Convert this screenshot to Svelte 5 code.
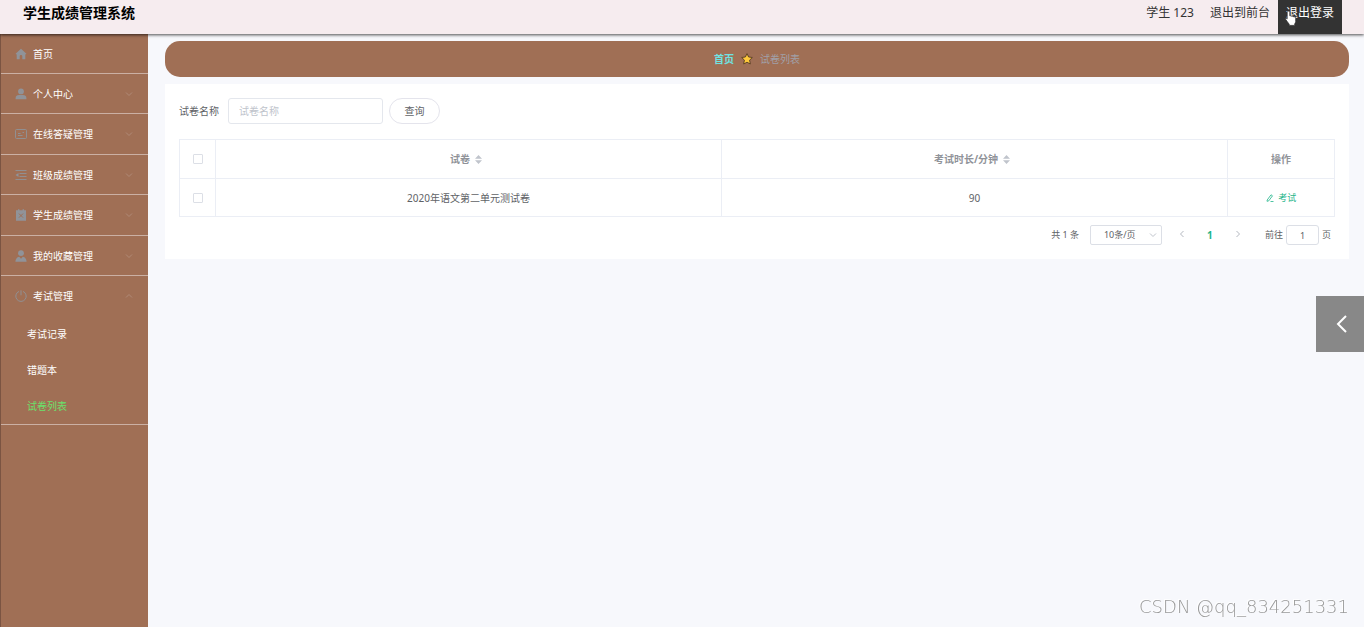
<script>
	let keyword = $state('')
	let pageSize = $state('10')
	let jump = $state('1')

	const menu = [
		{ title: '首页', icon: 'home' },
		{ title: '个人中心', icon: 'user', fold: true },
		{ title: '在线答疑管理', icon: 'postcard', fold: true },
		{ title: '班级成绩管理', icon: 'fold', fold: true },
		{ title: '学生成绩管理', icon: 'release', fold: true },
		{ title: '我的收藏管理', icon: 'custom', fold: true },
		{
			title: '考试管理',
			icon: 'power',
			fold: true,
			children: ['考试记录', '错题本', '试卷列表']
		}
	]
	const active = '试卷列表'

	const papers = [{ name: '2020年语文第二单元测试卷', minutes: 90 }]
</script>

{#snippet menuIcon(name)}
	<svg class="icon" viewBox="0 0 12 12" aria-hidden="true">
		{#if name === 'home'}
			<path d="M6 .8.600 5.800l.6.600.500-.4V11.300h3V8.200a1.300 1.300 0 0 1 2.600 0v3.100h3V6l.5.4.6-.6Z" />
		{:else if name === 'user'}
			<circle cx="6" cy="3.400" r="2.900" />
			<path d="M.6 11.300V9.900C.6 8.100 2.200 7.100 4 7.100h4c1.800 0 3.400 1 3.400 2.800v1.400Z" />
		{:else if name === 'postcard'}
			<rect class="line" x="0.500" y="1.500" width="11" height="9" rx="1" />
			<path class="line" d="M3 5.500h2.500M3 7.500h4.500M7.500 4.500h1.500" />
		{:else if name === 'fold'}
			<path class="line" d="M.5 1.500h11M4.500 4.500h7M4.500 7.500h7M.5 10.500h11" />
			<path d="M.5 6 3.500 4v4Z" />
		{:else if name === 'release'}
			<path d="M1 1.300h2V.3h1.400v1h3.200v-1H9v1h2v10.400H1Z" />
			<path class="cut" d="m4 4.600 4 4m0-4-4 4" />
		{:else if name === 'custom'}
			<circle cx="6" cy="3.200" r="2.900" />
			<path d="M.4 11.700C.4 9 1.800 7.200 4.200 6.700L6 8.800l1.800-2.100c2.400.5 3.800 2.300 3.800 5Z" />
		{:else}
			<path class="line" d="M4 1.400a5.200 5.200 0 1 0 4 0M6 .3v5" />
		{/if}
	</svg>
{/snippet}

{#snippet sorter()}
	<svg class="sorter" viewBox="0 0 7 9" aria-hidden="true">
		<path d="M3.500 0 7 3.800H0ZM3.500 9 0 5.200h7Z" />
	</svg>
{/snippet}

<div class="page">
	<header>
		<h1>学生成绩管理系统</h1>
		<nav class="account">
			<span>学生 123</span>
			<a href="#front">退出到前台</a>
			<a class="hovered" href="#logout">
				退出登录
				<svg class="pointer" viewBox="0 0 12 16" aria-hidden="true">
					<path
						d="M3.500 1.200c.9 0 1.300.6 1.300 1.400v3.200c1-.3 1.700 0 2 .5 1-.3 1.600 0 1.900.6 1.300-.2 2 .4 2 1.500v3.200c0 1-.7 1.700-1 2.400v1.400H4.200v-1.200C3 12.600 1.700 11 .8 9.600.200 8.300 1.300 7.700 2.200 8.800V2.600c0-.8.4-1.400 1.300-1.400Z"
					/>
				</svg>
			</a>
		</nav>
	</header>

	<div class="body">
		<aside>
			<ul class="menu">
				{#each menu as item}
					<li>
						<button class="menu-title" type="button" aria-expanded={item.fold ? !!item.children : undefined}>
							{@render menuIcon(item.icon)}
							<span>{item.title}</span>
							{#if item.fold}
								<svg class="arrow" class:open={item.children} viewBox="0 0 8 8" aria-hidden="true">
									<path d="m1 2.500 3 3 3-3" />
								</svg>
							{/if}
						</button>
						{#if item.children}
							<ul class="sub">
								{#each item.children as child}
									<li><a href="#{child}" class:active={child === active}>{child}</a></li>
								{/each}
							</ul>
						{/if}
					</li>
				{/each}
			</ul>
		</aside>

		<main>
			<nav class="breadcrumb">
				<a href="#home">首页</a>
				<svg class="star" viewBox="0 0 12 12" aria-hidden="true">
					<path d="m6 .7 1.600 3.300 3.700.5-2.700 2.600.7 3.900L6 9.200 2.700 11l.7-3.900L.7 4.500 4.400 4Z" />
				</svg>
				<span>试卷列表</span>
			</nav>

			<section class="card">
				<form class="search">
					<label for="keyword">试卷名称</label>
					<input id="keyword" type="text" placeholder="试卷名称" bind:value={keyword} />
					<button type="button">查询</button>
				</form>

				<table>
					<colgroup>
						<col class="col-check" />
						<col />
						<col />
						<col class="col-action" />
					</colgroup>
					<thead>
						<tr>
							<th><input type="checkbox" aria-label="全选" /></th>
							<th>试卷{@render sorter()}</th>
							<th>考试时长/分钟{@render sorter()}</th>
							<th>操作</th>
						</tr>
					</thead>
					<tbody>
						{#each papers as paper}
							<tr>
								<td><input type="checkbox" aria-label={paper.name} /></td>
								<td>{paper.name}</td>
								<td>{paper.minutes}</td>
								<td>
									<button class="exam" type="button">
										<svg viewBox="0 0 8 8" aria-hidden="true">
											<path d="M1.200 6 5 .8l1.500 1L2.800 6.800l-1.800.5ZM4.500 7.500h3" />
										</svg>
										考试
									</button>
								</td>
							</tr>
						{/each}
					</tbody>
				</table>

				<div class="pagination">
					<span class="total">共 {papers.length} 条</span>
					<span class="size">
						<select aria-label="每页条数" bind:value={pageSize}>
							<option value="10">10条/页</option>
							<option value="20">20条/页</option>
						</select>
						<svg class="arrow" viewBox="0 0 8 8" aria-hidden="true"><path d="m1 2.500 3 3 3-3" /></svg>
					</span>
					<button type="button" aria-label="上一页">
						<svg viewBox="0 0 8 8" aria-hidden="true"><path d="M5.500 1 2.500 4l3 3" /></svg>
					</button>
					<button class="current" type="button">1</button>
					<button type="button" aria-label="下一页">
						<svg viewBox="0 0 8 8" aria-hidden="true"><path d="m2.500 1 3 3-3 3" /></svg>
					</button>
					<label class="jump">前往 <input type="text" bind:value={jump} /> 页</label>
				</div>
			</section>
		</main>
	</div>

	<button class="drawer" type="button" aria-label="展开">
		<svg viewBox="0 0 20 20" aria-hidden="true"><path d="m14 2-8 8 8 8" /></svg>
	</button>
	<span class="watermark">CSDN @qq_834251331</span>
</div>

<style>
	:global(body) {
		margin: 0;
	}
	.page {
		display: flex;
		flex-direction: column;
		min-height: 100vh;
		background: #f7f8fc;
		color: #606266;
		font: 10px/14px 'Noto Sans', 'Noto Sans CJK SC', sans-serif;
	}
	.page * {
		box-sizing: border-box;
	}
	button,
	input,
	select {
		margin: 0;
		padding: 0;
		border: 0;
		background: none;
		color: inherit;
		font: inherit;
	}
	a {
		color: inherit;
		text-decoration: none;
	}
	ul {
		margin: 0;
		padding: 0;
		list-style: none;
	}
	svg {
		flex: none;
		fill: none;
	}

	header {
		position: relative;
		z-index: 1;
		display: flex;
		justify-content: space-between;
		height: 34px;
		padding: 0 22px 0 23px;
		background: #f6ecef;
		box-shadow: 0 1px 3px rgba(0, 0, 0, 0.7);
	}
	h1 {
		margin: 0;
		color: #000;
		font-size: 14px;
		line-height: 26px;
	}
	.account {
		display: flex;
		color: #333;
		font-size: 12px;
		line-height: 26px;
	}
	.account > * {
		padding: 0 8px;
	}
	.account .hovered {
		position: relative;
		background: #333;
		color: #fff;
	}
	.pointer {
		position: absolute;
		top: 10px;
		left: 7px;
		width: 12px;
		height: 16px;
		fill: #fff;
		stroke: #333;
		stroke-width: 0.8;
	}

	.body {
		display: flex;
		flex: 1;
	}
	aside {
		flex: none;
		width: 148px;
		border-left: 1px solid #7b5442;
		background: #a06f55;
		color: #fff;
	}
	.menu > li {
		border-bottom: 1px solid #cbb0a4;
	}
	.menu-title {
		display: flex;
		align-items: center;
		width: 100%;
		height: 39px;
		padding: 0 15px 0 14px;
		text-align: left;
	}
	.menu > li:nth-child(2n + 3) .menu-title {
		height: 40px;
	}
	.menu-title span {
		flex: 1;
	}
	.icon {
		width: 12px;
		height: 12px;
		margin-right: 6px;
		fill: #909399;
	}
	.icon .line {
		fill: none;
		stroke: #909399;
		stroke-width: 0.9;
	}
	.icon .cut {
		stroke: #a06f55;
	}
	.arrow {
		width: 8px;
		height: 8px;
		stroke: #b08a77;
	}
	.arrow.open {
		transform: rotate(180deg);
	}
	.sub a {
		display: block;
		padding-left: 26px;
		line-height: 36px;
	}
	.sub .active {
		color: #6be06b;
	}

	main {
		flex: 1;
		min-width: 0;
		padding: 7px 15px 0 17px;
	}
	.breadcrumb {
		display: flex;
		align-items: center;
		justify-content: center;
		gap: 7px;
		height: 36px;
		margin-bottom: 7px;
		border-radius: 15px;
		background: #a06f55;
		color: #a0a0a8;
	}
	.breadcrumb a {
		color: #6fe3e3;
		font-weight: 700;
	}
	.star {
		width: 12px;
		height: 12px;
		fill: #ffc93c;
		stroke: #4a3420;
		stroke-width: 0.8;
	}

	.card {
		padding: 14px 14px 13px;
		background: #fff;
	}
	.search {
		display: flex;
		align-items: center;
		margin-bottom: 15px;
	}
	.search input {
		width: 155px;
		height: 26px;
		margin: 0 6px 0 9px;
		padding: 0 10px;
		border: 1px solid #e4e7ed;
		border-radius: 3px;
	}
	.search input::placeholder {
		color: #c0c4cc;
	}
	.search button {
		width: 51px;
		height: 26px;
		border: 1px solid #e4e4ec;
		border-radius: 13px;
	}

	table {
		width: 100%;
		border-collapse: collapse;
		table-layout: fixed;
	}
	.col-check {
		width: 36px;
	}
	.col-action {
		width: 107px;
	}
	th,
	td {
		height: 38px;
		padding: 0;
		border: 1px solid #ebeef5;
		text-align: center;
		vertical-align: middle;
	}
	th {
		height: 39px;
		color: #909399;
	}
	table input {
		display: block;
		width: 10px;
		height: 10px;
		margin: 0 auto;
		border: 1px solid #dcdfe6;
		border-radius: 1px;
		appearance: none;
	}
	.sorter {
		width: 7px;
		height: 9px;
		margin: 0 5px;
		vertical-align: -1px;
		fill: #c0c4cc;
	}
	.exam {
		color: #1fb58a;
		font-size: 9px;
	}
	.exam svg {
		width: 8px;
		height: 8px;
		margin-right: 2px;
		vertical-align: -1px;
		stroke: #1fb58a;
		stroke-width: 0.8;
	}

	.pagination {
		display: flex;
		align-items: center;
		justify-content: flex-end;
		height: 20px;
		margin-top: 8px;
		padding-right: 4px;
		font-size: 9px;
	}
	.card .pagination {
		margin-bottom: 1px;
	}
	.total {
		margin-right: 11px;
	}
	.size {
		position: relative;
		margin-right: 6px;
	}
	select {
		display: block;
		width: 72px;
		height: 20px;
		padding-left: 13px;
		border: 1px solid #dcdfe6;
		border-radius: 2px;
		appearance: none;
	}
	.size .arrow {
		position: absolute;
		top: 6px;
		right: 5px;
		stroke: #c0c4cc;
	}
	.pagination button {
		width: 28px;
		height: 20px;
	}
	.pagination button svg {
		width: 8px;
		height: 8px;
		stroke: #b4b8c0;
	}
	.pagination .current {
		color: #1fb58a;
		font-size: 10px;
		font-weight: 700;
	}
	.jump {
		display: flex;
		align-items: center;
		gap: 3px;
		margin-left: 13px;
	}
	.jump input {
		width: 33px;
		height: 20px;
		border: 1px solid #dcdfe6;
		border-radius: 3px;
		text-align: center;
	}

	.drawer {
		position: fixed;
		top: calc(50% - 18px);
		right: 0;
		display: flex;
		align-items: center;
		width: 48px;
		height: 56px;
		padding-left: 16px;
		background: #888;
	}
	.drawer svg {
		width: 20px;
		height: 20px;
		stroke: #fff;
		stroke-width: 2;
	}
	.watermark {
		position: fixed;
		right: 15px;
		bottom: 8px;
		color: #999;
		font: 200 18px/24px 'DejaVu Sans', sans-serif;
		text-shadow: -1px -1px 0 #fff;
	}
</style>
